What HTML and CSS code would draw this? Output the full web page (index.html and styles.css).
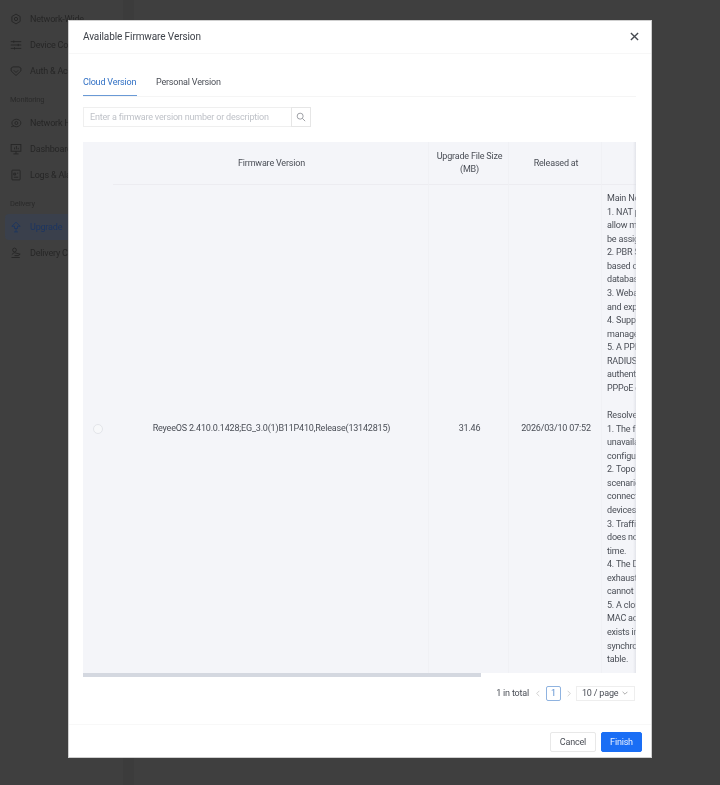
FILE: index.html
```html
<!DOCTYPE html>
<html lang="en">
<head>
<meta charset="utf-8">
<title>Available Firmware Version</title>
<link rel="stylesheet" href="styles.css">
</head>
<body>
<div class="app">
  <aside class="sidebar">
    <div class="nav-item">
      <svg class="nav-icon" viewBox="0 0 16 16"><path d="M8 1.500l5.500 3.200v6.600L8 14.500l-5.500-3.200V4.700z"/><circle cx="8" cy="8" r="2.200"/></svg>
      <span>Network-Wide</span>
    </div>
    <div class="nav-item">
      <svg class="nav-icon" viewBox="0 0 16 16"><path d="M1 3.500h14M1 8h14M1 12.500h14M5 2v3M11 6.500v3M6 11v3"/></svg>
      <span>Device Config</span>
    </div>
    <div class="nav-item">
      <svg class="nav-icon" viewBox="0 0 16 16"><path d="M1.500 4L4 2.500h8L14.500 4v4L8 14 1.500 8z"/><path d="M5 7l3 3 3-3"/></svg>
      <span>Auth &amp; Account</span>
    </div>
    <div class="nav-group">Monitoring</div>
    <div class="nav-item">
      <svg class="nav-icon" viewBox="0 0 16 16"><ellipse cx="8.500" cy="8" rx="6" ry="5"/><circle cx="8.500" cy="8" r="2"/><path d="M1.500 13l4-1.500"/></svg>
      <span>Network Health</span>
    </div>
    <div class="nav-item">
      <svg class="nav-icon" viewBox="0 0 16 16"><rect x="1.500" y="2" width="13" height="9"/><path d="M8 11v3.500M4.500 14.500h7M6 8.500V6M8.500 8.500V4M11 8.500V6.500"/></svg>
      <span>Dashboard</span>
    </div>
    <div class="nav-item">
      <svg class="nav-icon" viewBox="0 0 16 16"><rect x="2.500" y="1.500" width="11" height="13" rx="1"/><path d="M5 5.500h2.500V8H5zM9.500 5.500h1.500M5 11h6"/></svg>
      <span>Logs &amp; Alarms</span>
    </div>
    <div class="nav-group">Delivery</div>
    <div class="nav-item active">
      <svg class="nav-icon" viewBox="0 0 16 16"><path d="M8 1.500L13.500 7H10v3H6V7H2.500z"/><path d="M8 10v4.500M5.500 14.500h5"/></svg>
      <span>Upgrade</span>
    </div>
    <div class="nav-item">
      <svg class="nav-icon" viewBox="0 0 16 16"><circle cx="6" cy="4" r="2.500"/><path d="M2.500 10l3-2.500 8 2-2.500 2H6M2 14h11"/></svg>
      <span>Delivery Center</span>
    </div>
  </aside>
  <main class="content"></main>
</div>
<div class="mask">
  <section class="modal">
    <header class="modal-head">
      <h1 class="modal-title">Available Firmware Version</h1>
      <svg class="close" viewBox="0 0 10 10"><path d="M1 1l8 8M9 1l-8 8"/></svg>
    </header>
    <div class="modal-body">
      <nav class="tabs">
        <span class="tab current">Cloud Version</span>
        <span class="tab">Personal Version</span>
      </nav>
      <div class="search">
        <span class="search-input">Enter a firmware version number or description</span>
        <span class="search-btn">
          <svg viewBox="0 0 12 12"><circle cx="5" cy="5" r="3.600"/><path d="M7.700 7.700L11 11"/></svg>
        </span>
      </div>
      <div class="table">
        <div class="table-scroll">
          <div class="row head">
            <div class="cell c-radio"></div>
            <div class="cell c-ver">Firmware Version</div>
            <div class="cell c-size">Upgrade File Size<br>(MB)</div>
            <div class="cell c-date">Released at</div>
            <div class="cell c-desc"></div>
          </div>
          <div class="row body">
            <div class="cell c-radio"><span class="radio"></span></div>
            <div class="cell c-ver">ReyeeOS 2.410.0.1428;EG_3.0(1)B11P410,Release(13142815)</div>
            <div class="cell c-size">31.46</div>
            <div class="cell c-date">2026/03/10 07:52</div>
            <div class="cell c-desc">Main New Features:<br>1. NAT port mapping rules<br>allow multiple ports to<br>be assigned to a server.<br>2. PBR SSL VPN routes<br>based on the geo-IP<br>database are supported.<br>3. Webauth page import<br>and export is supported.<br>4. Support cloud-based<br>management of the VPN.<br>5. A PPPoE server with<br>RADIUS server<br>authentication for the<br>PPPoE client is added.<br><br>Resolved Issues:<br>1. The failover link was<br>unavailable after the<br>configuration changed.<br>2. Topology errors in some<br>scenarios with multiple<br>connected downstream<br>devices are resolved.<br>3. Traffic statistics page<br>does not update in real<br>time.<br>4. The DHCP pool that is<br>exhausted on the gateway<br>cannot be recovered.<br>5. A cloud-managed client<br>MAC address which<br>exists in the ARP is not<br>synchronized to the route<br>table.</div>
          </div>
        </div>
        <div class="scrollbar"><span class="thumb"></span></div>
      </div>
      <div class="pager">
        <span class="total">1 in total</span>
        <svg class="arrow" viewBox="0 0 6 10"><path d="M5 1L1 5l4 4"/></svg>
        <span class="page">1</span>
        <svg class="arrow" viewBox="0 0 6 10"><path d="M1 1l4 4-4 4"/></svg>
        <span class="size">10 / page <svg class="caret" viewBox="0 0 10 6"><path d="M1 1l4 4 4-4"/></svg></span>
      </div>
    </div>
    <footer class="modal-foot">
      <button class="btn">Cancel</button>
      <button class="btn primary">Finish</button>
    </footer>
  </section>
</div>
</body>
</html>
```
FILE: styles.css
```css
* { box-sizing: border-box; }
html, body { margin: 0; height: 100%; }
body {
  width: 720px;
  height: 785px;
  overflow: hidden;
  position: relative;
  font-family: Roboto, "Liberation Sans", sans-serif;
  font-size: 9px;
  letter-spacing: -0.19px;
  color: #3a3f47;
  background: #3c3c3c;
}
.app { display: flex; height: 785px; filter: blur(0.4px); }
.sidebar {
  width: 123px;
  padding-top: 6px;
  background: #3f3f3f;
  color: #262626;
  flex: none;
}
.content { flex: 1; margin-left: 11px; background: #3f3f3f; }
.nav-item {
  height: 26px;
  display: flex;
  align-items: center;
  gap: 8px;
  padding-left: 10px;
  margin-right: 8px;
  white-space: nowrap;
  overflow: hidden;
  border-radius: 4px;
}
.nav-item.active { background: #3a404c; color: #1c3561; margin-left: 5px; padding-left: 5px; }
.nav-icon { width: 12px; height: 12px; fill: none; stroke: currentColor; stroke-width: 1.200; flex: none; }
.nav-group { height: 26px; padding: 6px 0 0 10px; line-height: 20px; font-size: 7.500px; color: #2a2a2a; }
.mask { position: absolute; inset: 0; filter: blur(0.35px); }
.modal {
  position: absolute;
  left: 68px;
  top: 20px;
  width: 584px;
  height: 738px;
  background: #fff;
  border: 1px solid #cfcfcf;
  display: flex;
  flex-direction: column;
}
.modal-head {
  height: 33px;
  flex: none;
  padding: 0 12px 1px 14px;
  display: flex;
  align-items: center;
  justify-content: space-between;
  border-bottom: 1px solid #f7f7f7;
}
.modal-title { margin: 0; font-size: 10px; font-weight: 400; letter-spacing: -0.1px; color: #3e4249; }
.close { width: 9px; height: 9px; fill: none; stroke: #44484f; stroke-width: 1.500; }
.modal-body { flex: 1; padding: 0 15px 0 14px; display: flex; flex-direction: column; }
.tabs {
  height: 43px;
  flex: none;
  display: flex;
  gap: 19px;
  align-items: flex-end;
  border-bottom: 1px solid #f5f5f5;
}
.tab { height: 22px; line-height: 14px; padding-top: 1px; color: #4a4e56; white-space: nowrap; }
.tab.current { color: #2f6fc4; border-bottom: 1.500px solid #6a9ad6; width: 54px; }
.search { display: flex; height: 20px; margin-top: 10px; width: 228px; flex: none; }
.search-input {
  flex: 1;
  border: 1px solid #efefef;
  border-right: 0;
  padding-left: 6px;
  line-height: 18px;
  color: #bfc2c8;
  white-space: nowrap;
}
.search-btn {
  width: 20px;
  border: 1px solid #e6e6e6;
  display: flex;
  align-items: center;
  justify-content: center;
}
.search-btn svg { width: 10px; height: 10px; fill: none; stroke: #8b8e94; stroke-width: 1; }
.table { position: relative; margin-top: 15px; height: 536px; flex: none; overflow: hidden; background: #fff; }
.table-scroll { height: 536px; width: 553px; overflow: hidden; position: relative; }
.table-scroll::after {
  content: "";
  position: absolute;
  top: 0;
  right: 0;
  bottom: 4px;
  width: 3px;
  background: linear-gradient(to right, rgba(210, 212, 220, 0), rgba(210, 212, 220, 0.5));
}
.row { display: flex; background: #f4f5f9; width: 640px; }
.head { height: 43px; }
.body { height: 493px; }
.cell { display: flex; align-items: center; justify-content: center; text-align: center; color: #4a4e56; line-height: 13px; flex: none; }
.head .c-ver, .head .c-size, .head .c-date, .head .c-desc { border-bottom: 1px solid #ececf1; }
.c-radio { width: 30px; }
.c-ver { width: 316px; padding-left: 2px; border-right: 1px solid #f0f1f5; }
.c-size { width: 80px; padding-left: 2px; border-right: 1px solid #f0f1f5; }
.c-date { width: 93px; padding-left: 2px; border-right: 1px solid #f0f1f5; }
.c-desc { width: 124px; }
.body .c-ver, .body .c-size, .body .c-date, .body .c-radio { padding-bottom: 6px; }
.body .c-desc {
  display: block;
  text-align: left;
  padding: 7px 0 0 5px;
  line-height: 13.560px;
  white-space: nowrap;
}
.radio { width: 10px; height: 10px; border: 1px solid #e3e5ea; border-radius: 50%; background: #f7f8fa; }
.scrollbar { position: absolute; left: 0; right: 0; bottom: 0; height: 5px; background: #fff; }
.thumb { display: block; width: 398px; height: 4px; background: #d4d8e0; }
.pager {
  display: flex;
  align-items: center;
  justify-content: flex-end;
  height: 30px;
  padding-right: 1px;
  color: #4a4e56;
}
.total { margin-right: 2px; }
.arrow { width: 4px; height: 7px; fill: none; stroke: #bbb; stroke-width: 1; margin: 0 5px; }
.page {
  width: 15px;
  height: 15px;
  margin: 0 1px;
  border: 1px solid #8fb3e0;
  border-radius: 2px;
  color: #5a8fd0;
  text-align: center;
  line-height: 13px;
}
.size {
  width: 59px;
  height: 15px;
  border: 1px solid #eee;
  padding-left: 5px;
  line-height: 13px;
  display: flex;
  align-items: center;
  gap: 4px;
  white-space: nowrap;
}
.caret { width: 6px; height: 4px; fill: none; stroke: #777; stroke-width: 1; }
.modal-foot {
  height: 33px;
  flex: none;
  border-top: 1px solid #f8f8f8;
  display: flex;
  justify-content: flex-end;
  align-items: flex-start;
  gap: 5px;
  padding: 7px 9px 0 0;
}
.btn {
  width: 46px;
  height: 20px;
  padding: 0;
  font: inherit;
  letter-spacing: inherit;
  background: #fff;
  color: #4a4e56;
  border: 1px solid #e8e8e8;
  border-radius: 2px;
}
.btn.primary { width: 41px; background: #1a6ef5; border-color: #1a6ef5; color: #e8f0ff; }
```
